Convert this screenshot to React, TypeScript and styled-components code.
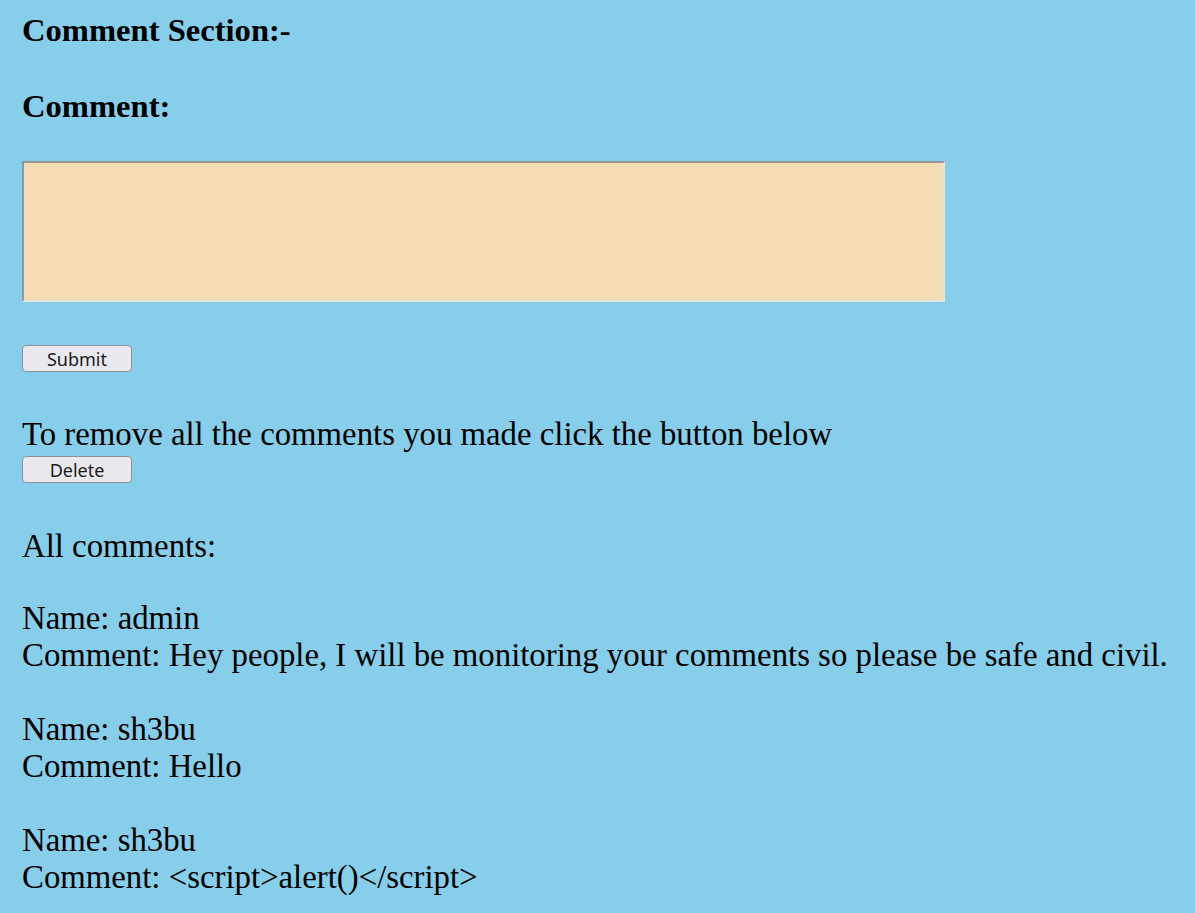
import React from "react";
import styled, { createGlobalStyle } from "styled-components";

const GlobalStyle = createGlobalStyle`
  html, body {
    margin: 0;
    padding: 0;
    background: #87ceeb;
  }
  body {
    font-family: "Liberation Serif", "Times New Roman", serif;
    font-size: 32.8px;
    line-height: 37px;
    color: #000;
  }
`;

const Page = styled.div`
  display: flex;
  flex-direction: column;
  align-items: flex-start;
  padding: 12px 22px 40px 22px;
`;

const Heading = styled.h4<{ $gap: number }>`
  margin: 0 0 ${(p) => p.$gap}px 0;
  font-size: 32.6px;
  line-height: 37px;
  font-weight: bold;
`;

const CommentBox = styled.textarea`
  box-sizing: border-box;
  width: 923px;
  height: 141px;
  margin: 0 0 43px 0;
  padding: 2px;
  resize: none;
  background: #f5deb3;
  border-style: solid;
  border-width: 2px;
  border-color: #979797 #e3e3e3 #e3e3e3 #979797;
  font-family: "Liberation Mono", monospace;
  font-size: 13px;
  outline: none;
`;

const ActionButton = styled.button<{ $gap: number; $top?: number }>`
  box-sizing: border-box;
  width: 110px;
  height: 27px;
  margin: ${(p) => p.$top ?? 0}px 0 ${(p) => p.$gap}px 0;
  padding: 0;
  background: #e9e9ed;
  border: 1px solid #8f8f9d;
  border-radius: 4px;
  font-family: "Noto Sans", "Open Sans", sans-serif;
  font-size: 18px;
  line-height: 24px;
  color: #1b1b1b;
  cursor: pointer;
`;

const Text = styled.div<{ $gap?: number }>`
  margin: 0 0 ${(p) => p.$gap ?? 0}px 0;
`;

const CommentList = styled.div`
  display: flex;
  flex-direction: column;
  gap: 37px;
`;

const CommentEntry = styled.div`
  display: flex;
  flex-direction: column;
`;

const comments = [
  {
    name: "admin",
    text: "Hey people, I will be monitoring your comments so please be safe and civil.",
  },
  { name: "sh3bu", text: "Hello" },
  { name: "sh3bu", text: "<script>alert()</script>" },
];

export default function App() {
  return (
    <>
      <GlobalStyle />
      <Page>
        <Heading $gap={39}>Comment Section:-</Heading>
        <Heading $gap={36}>Comment:</Heading>
        <CommentBox />
        <ActionButton $gap={44}>Submit</ActionButton>
        <Text>To remove all the comments you made click the button below</Text>
        <ActionButton $top={3} $gap={45}>
          Delete
        </ActionButton>
        <Text $gap={35}>All comments:</Text>
        <CommentList>
          {comments.map((c, i) => (
            <CommentEntry key={i}>
              <span>Name: {c.name}</span>
              <span>Comment: {c.text}</span>
            </CommentEntry>
          ))}
        </CommentList>
      </Page>
    </>
  );
}
